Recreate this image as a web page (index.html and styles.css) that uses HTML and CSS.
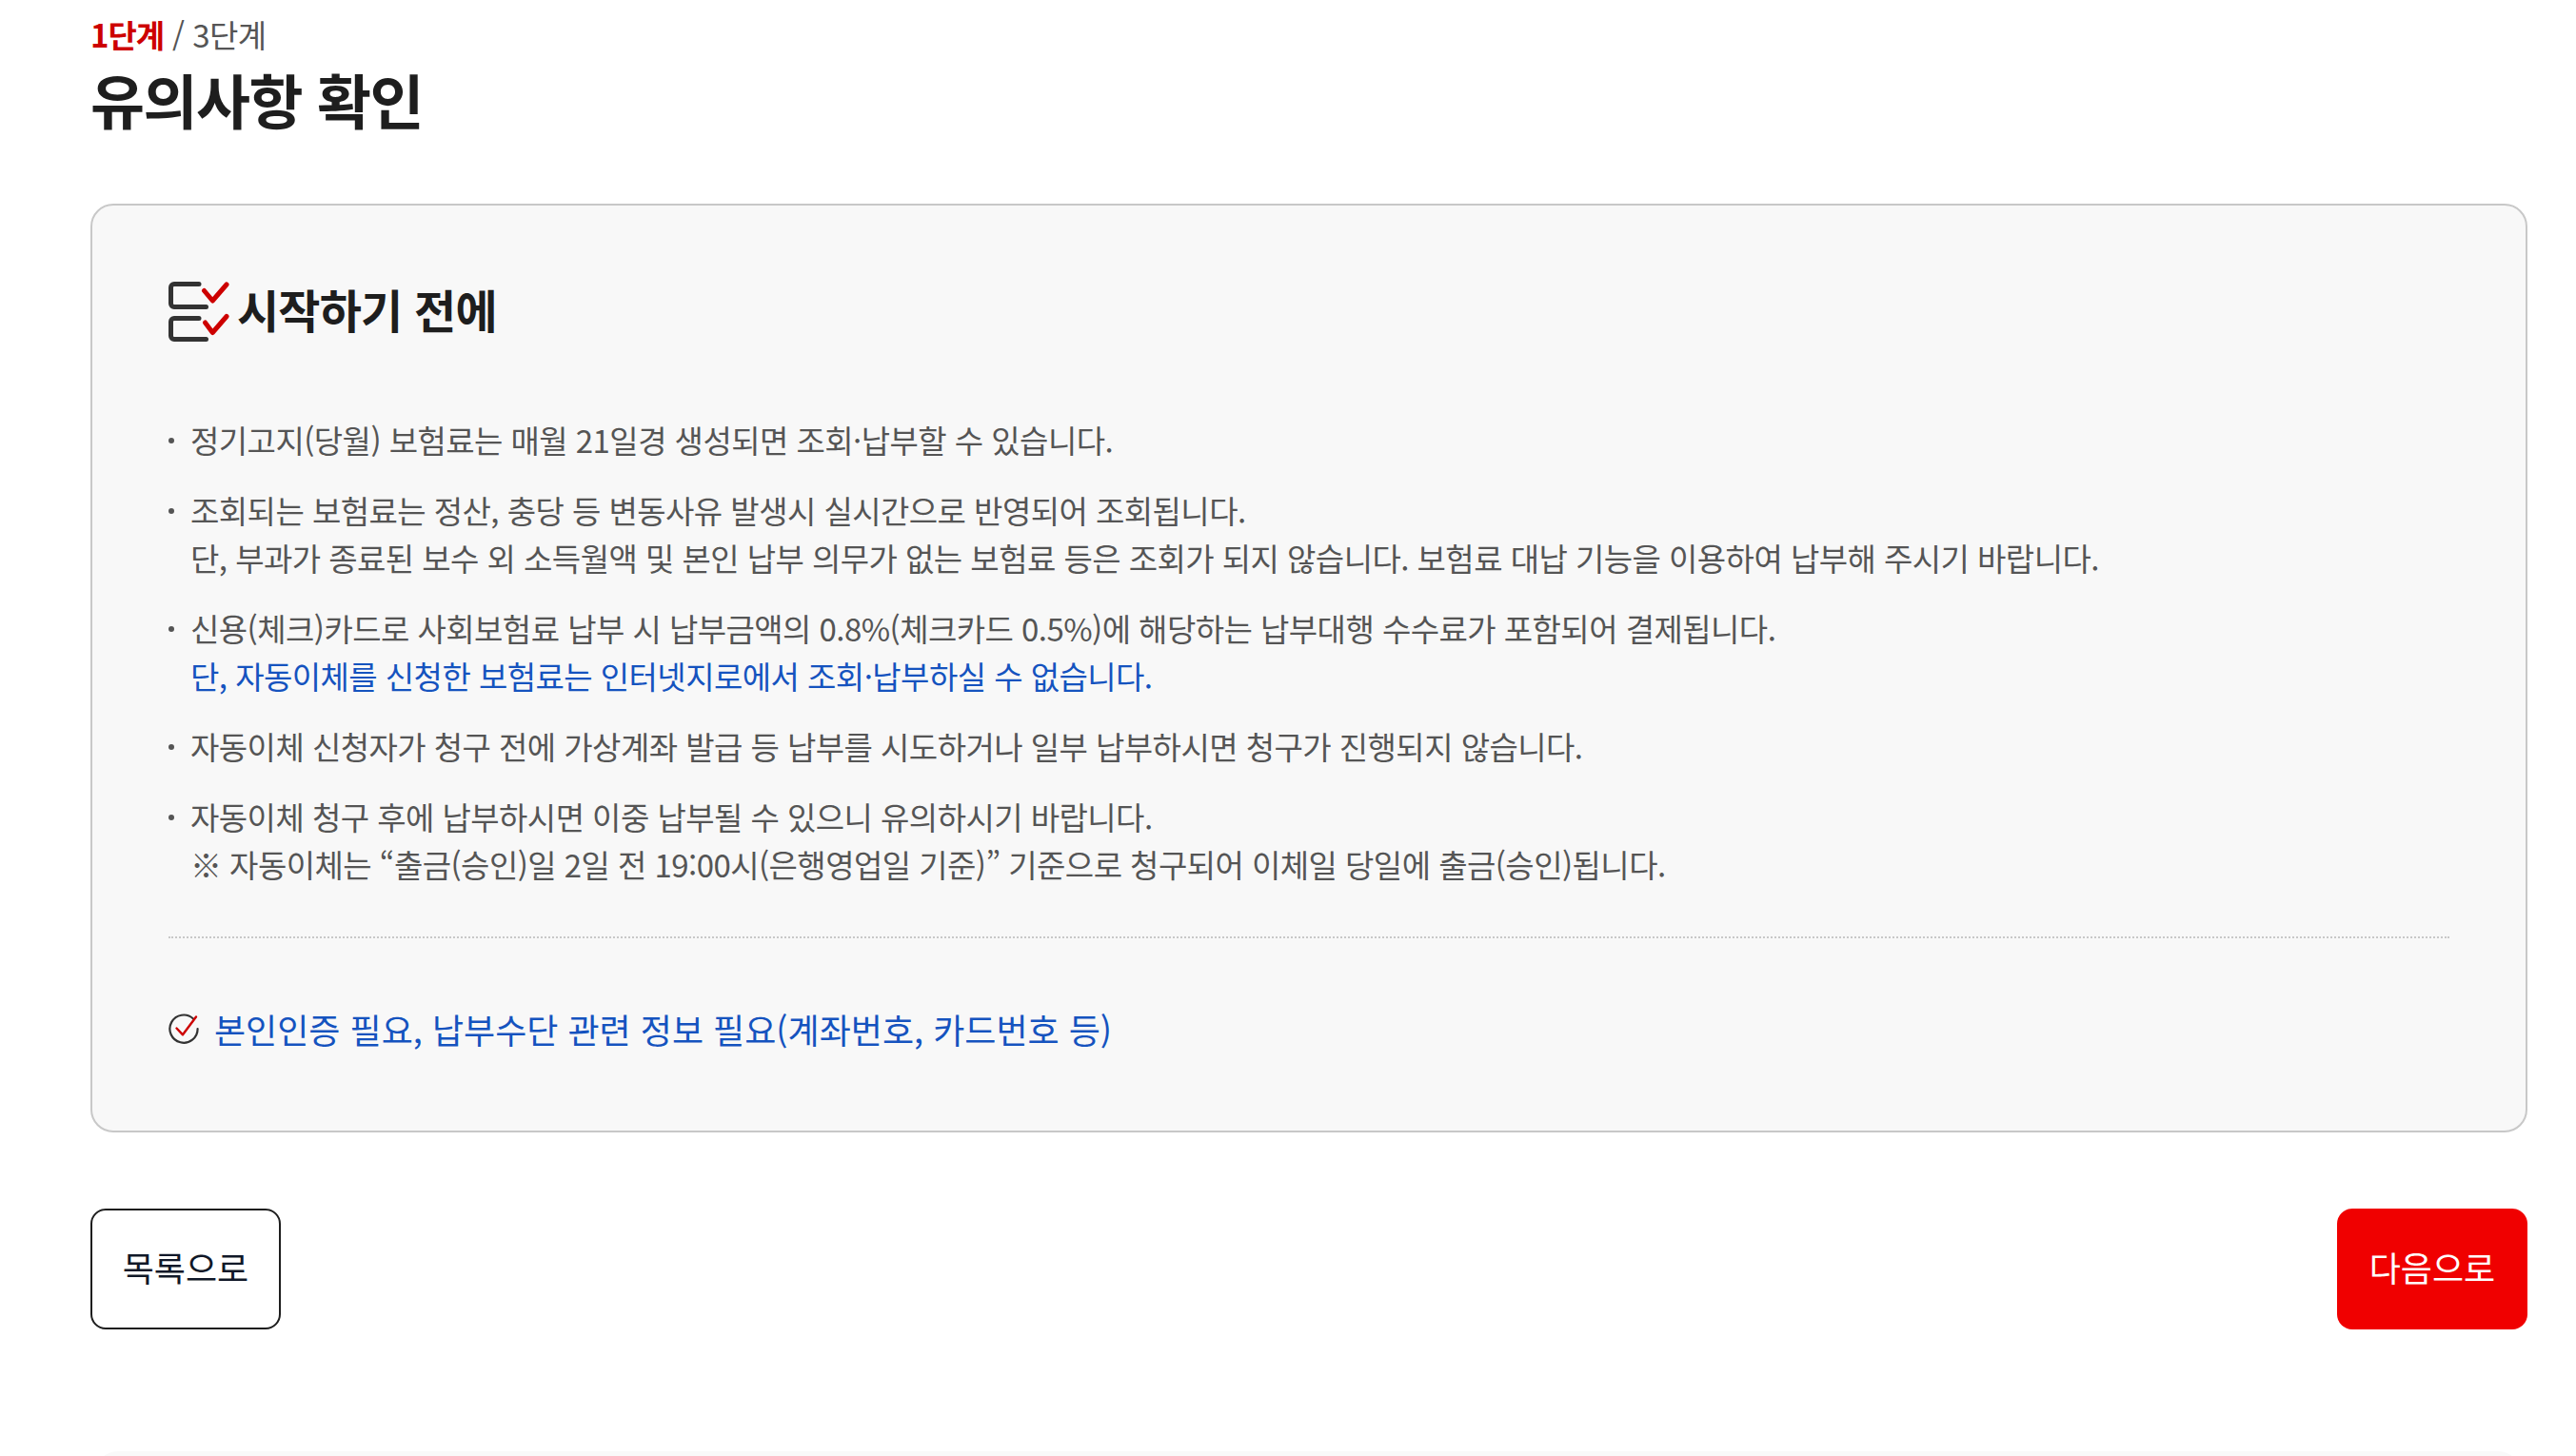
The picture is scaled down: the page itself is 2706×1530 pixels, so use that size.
FILE: index.html
```html
<!DOCTYPE html>
<html lang="ko">
<head>
<meta charset="utf-8">
<title>유의사항 확인</title>
<link rel="stylesheet" href="styles.css">
</head>
<body>
<main class="page">
  <p class="step"><strong class="step-now">1단계</strong> / 3단계</p>
  <h1 class="title">유의사항 확인</h1>
  <section class="card">
    <div class="card-head">
      <svg class="head-icon" width="64" height="63" viewBox="0 0 64 63" fill="none" stroke-linecap="round" stroke-linejoin="round">
        <path d="M32 2.5H6A3.5 3.5 0 0 0 2.5 6V23A3.5 3.5 0 0 0 6 26.5H39.5" stroke="#333" stroke-width="5"/>
        <path d="M32 38.5H6A3.5 3.5 0 0 0 2.5 42V57A3.5 3.5 0 0 0 6 60.5H39.5" stroke="#333" stroke-width="5"/>
        <path d="M37.5 9.5L46.3 20L61 3" stroke="#cd0000" stroke-width="5"/>
        <path d="M38.5 43L46.3 53.5L61 36.5" stroke="#cd0000" stroke-width="5"/>
      </svg>
      <h2 class="card-title">시작하기 전에</h2>
    </div>
    <ul class="notes">
      <li>정기고지(당월) 보험료는 매월 21일경 생성되면 조회·납부할 수 있습니다.</li>
      <li>조회되는 보험료는 정산, 충당 등 변동사유 발생시 실시간으로 반영되어 조회됩니다.<br>단, 부과가 종료된 보수 외 소득월액 및 본인 납부 의무가 없는 보험료 등은 조회가 되지 않습니다. 보험료 대납 기능을 이용하여 납부해 주시기 바랍니다.</li>
      <li>신용(체크)카드로 사회보험료 납부 시 납부금액의 0.8%(체크카드 0.5%)에 해당하는 납부대행 수수료가 포함되어 결제됩니다.<br><span class="blue">단, 자동이체를 신청한 보험료는 인터넷지로에서 조회·납부하실 수 없습니다.</span></li>
      <li>자동이체 신청자가 청구 전에 가상계좌 발급 등 납부를 시도하거나 일부 납부하시면 청구가 진행되지 않습니다.</li>
      <li>자동이체 청구 후에 납부하시면 이중 납부될 수 있으니 유의하시기 바랍니다.<br>※ 자동이체는 “출금(승인)일 2일 전 19:00시(은행영업일 기준)” 기준으로 청구되어 이체일 당일에 출금(승인)됩니다.</li>
    </ul>
    <div class="needs">
      <svg class="needs-icon" width="32" height="32" viewBox="0 0 32 32" fill="none" stroke-linecap="round" stroke-linejoin="round">
        <path d="M26 5.5A14.6 14.6 0 1 0 30.6 16" stroke="#333" stroke-width="2.2"/>
        <path d="M8.5 15.5L15 22.3L29 3.5" stroke="#cd0000" stroke-width="2.4"/>
      </svg>
      <span>본인인증 필요, 납부수단 관련 정보 필요(계좌번호, 카드번호 등)</span>
    </div>
  </section>
  <div class="actions">
    <button class="btn btn-line" type="button">목록으로</button>
    <button class="btn btn-red" type="button">다음으로</button>
  </div>
  <div class="footer-edge"></div>
</main>
</body>
</html>
```
FILE: styles.css
```css
* { box-sizing: border-box; }
html, body { margin: 0; padding: 0; background: #fff; }
body {
  font-family: "Noto Sans CJK KR", "Noto Sans", sans-serif;
  color: #1e1e1e;
  height: 1530px;
  overflow: hidden;
}
.page { padding: 0 51px 0 95px; }
.step {
  margin: 0;
  padding-top: 14px;
  font-size: 33px;
  line-height: 44px;
  letter-spacing: -0.5px;
  color: #555;
}
.step-now { color: #cd0000; font-weight: 700; letter-spacing: -1px; }
.title {
  margin: 5px 0 0;
  font-size: 62px;
  line-height: 82px;
  font-weight: 700;
  letter-spacing: -1.5px;
  color: #1e1e1e;
}
.card {
  margin-top: 69px;
  height: 976px;
  border: 2px solid #c8c8c8;
  border-radius: 24px;
  background: #f8f8f8;
  padding: 80px 80px 0;
}
.card-head { display: flex; align-items: flex-start; gap: 8px; height: 63px; }
.head-icon { flex: none; }
.card-title {
  margin: 0;
  font-size: 48px;
  line-height: 56px;
  font-weight: 700;
  letter-spacing: -0.8px;
}
.notes {
  margin: 78px 0 0;
  padding: 0 0 51px;
  list-style: none;
  border-bottom: 2px dotted #c8c8c8;
  font-size: 33px;
  line-height: 50px;
  letter-spacing: -0.56px;
  color: #555;
}
.notes li { position: relative; padding-left: 23px; margin-bottom: 24px; }
.notes li:last-child { margin-bottom: 0; }
.notes li::before {
  content: "";
  position: absolute;
  left: 0;
  top: 23px;
  width: 6px;
  height: 6px;
  border-radius: 50%;
  background: #555;
}
.blue { color: #1553bf; }
.needs {
  display: flex;
  align-items: center;
  gap: 16px;
  margin-top: 67px;
  font-size: 36px;
  line-height: 56px;
  color: #1553bf;
}
.needs-icon { flex: none; }
.actions { display: flex; justify-content: space-between; margin-top: 80px; }
.btn {
  width: 200px;
  height: 127px;
  border-radius: 16px;
  font-family: inherit;
  font-size: 36px;
  padding: 0 0 6px;
}
.btn-line { background: #fff; border: 2px solid #1e1e1e; color: #101828; }
.btn-red { background: #f00000; border: 0; color: #fff; }
.footer-edge {
  margin: 128px 0 0 5px;
  height: 40px;
  width: 2548px;
  border-radius: 24px 24px 0 0;
  background: #f9f9f9;
}
```
